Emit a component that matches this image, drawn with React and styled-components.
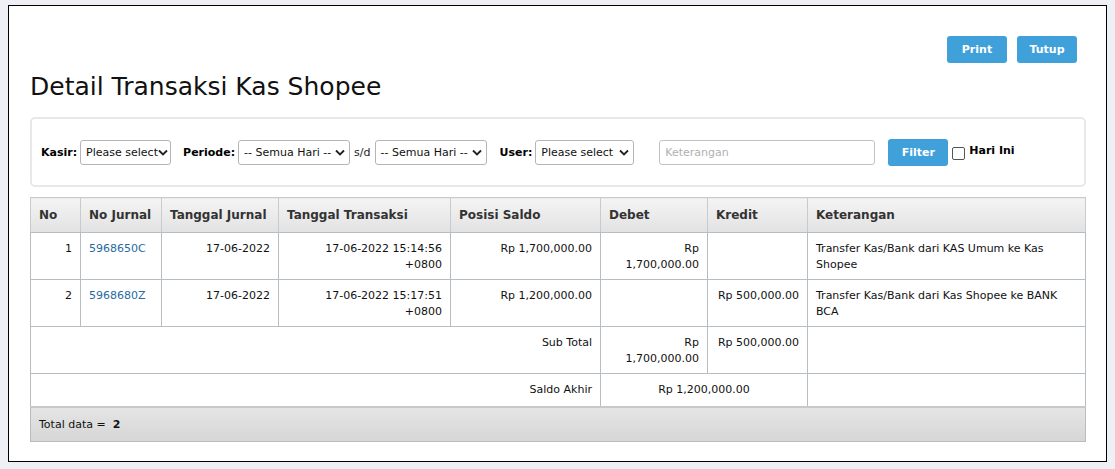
import React from "react";
import styled, { createGlobalStyle } from "styled-components";

const GlobalStyle = createGlobalStyle`
  html, body {
    margin: 0;
    padding: 0;
    background: #eff0f6;
  }
  body {
    font-family: "DejaVu Sans", Verdana, sans-serif;
    color: #000;
  }
`;

const Page = styled.div`
  padding: 5px 8px 8px 8px;
`;

const Panel = styled.div`
  background: #fff;
  border: 1px solid #000;
  height: 457px;
  box-sizing: border-box;
  padding: 30px 20px 20px 21px;
`;

const Toolbar = styled.div`
  display: flex;
  justify-content: flex-end;
  gap: 10px;
  padding-right: 9px;
`;

const Button = styled.button`
  width: ${(p) => p.w || 60}px;
  height: 27px;
  border: none;
  border-radius: 3px;
  background: #40a0da;
  color: #fff;
  font-family: "DejaVu Sans", Verdana, sans-serif;
  font-weight: bold;
  font-size: 11px;
  padding: 0;
  margin-left: ${(p) => p.ml || 0}px;
  cursor: pointer;
`;

const Title = styled.h1`
  margin: 8px 0 14px 0;
  font-weight: normal;
  font-size: 25px;
  line-height: 32px;
  color: #111;
`;

const FilterBox = styled.div`
  border: 2px solid #e8e8e8;
  border-radius: 5px;
  height: 70px;
  box-sizing: border-box;
  display: flex;
  align-items: center;
  padding: 0 9px;
  font-size: 11px;
`;

const Label = styled.label`
  font-weight: bold;
  font-size: 11px;
  margin: 0 3px 0 ${(p) => p.ml || 0}px;
`;

const Sep = styled.span`
  margin: 0 4px;
  font-size: 11px;
  color: #222;
`;

const Select = styled.div`
  width: ${(p) => p.w}px;
  height: 25px;
  box-sizing: border-box;
  border: 1px solid #b5b5b5;
  border-radius: 3px;
  display: flex;
  align-items: center;
  justify-content: space-between;
  padding: 0 4px 0 5px;
  font-size: 11px;
  white-space: nowrap;
  overflow: hidden;
  color: #111;
`;

const Chevron = () => (
  <svg width="10" height="7" viewBox="0 0 10 7" style={{ flexShrink: 0 }}>
    <path d="M1 1.5 L5 5.5 L9 1.5" fill="none" stroke="#222" strokeWidth="1.8" />
  </svg>
);

const Input = styled.div`
  width: 216px;
  height: 25px;
  box-sizing: border-box;
  border: 1px solid #c3c3c3;
  border-radius: 3px;
  margin-left: 25px;
  display: flex;
  align-items: center;
  padding-left: 5px;
  font-size: 11px;
  color: #b0b0b0;
`;

const Check = styled.span`
  width: 11px;
  height: 11px;
  border: 1px solid #555;
  border-radius: 2px;
  margin: 2px 4px 0 4px;
  display: inline-block;
`;

const CheckLabel = styled.span`
  font-weight: bold;
  font-size: 11px;
  align-self: flex-start;
  margin-top: 25px;
`;

const Table = styled.table`
  margin-top: 10px;
  width: 1056px;
  border-collapse: collapse;
  table-layout: fixed;
  font-size: 11px;
  border: 1px solid #b6bec3;
`;

const Th = styled.th`
  height: 35px;
  box-sizing: border-box;
  text-align: left;
  padding: 0 8px;
  font-size: 12px;
  color: #333;
  background: linear-gradient(#f4f4f4, #e2e2e2);
  border: 1px solid #c6cbce;
  border-bottom: 1px solid #b6bec3;
`;

const Td = styled.td`
  border: 1px solid #b6bec3;
  padding: 8px 8px 6px 8px;
  vertical-align: top;
  line-height: 16px;
  height: ${(p) => p.h || 31}px;
  box-sizing: border-box;
  text-align: ${(p) => p.align || "left"};
  color: #111;
`;

const Link = styled.a`
  color: #2a6aa0;
  text-decoration: none;
`;

const FootTd = styled.td`
  height: 33px;
  padding: 0 8px;
  background: linear-gradient(#e4e4e4, #d6d6d6);
  border-top: 2px solid #c8c8c8;
  font-size: 11px;
  color: #111;
`;

const rows = [
  {
    no: 1,
    jurnal: "5968650C",
    tgl: "17-06-2022",
    trans: "17-06-2022 15:14:56 +0800",
    saldo: "Rp 1,700,000.00",
    debet: "Rp 1,700,000.00",
    kredit: "",
    ket: "Transfer Kas/Bank dari KAS Umum ke Kas Shopee",
  },
  {
    no: 2,
    jurnal: "5968680Z",
    tgl: "17-06-2022",
    trans: "17-06-2022 15:17:51 +0800",
    saldo: "Rp 1,200,000.00",
    debet: "",
    kredit: "Rp 500,000.00",
    ket: "Transfer Kas/Bank dari Kas Shopee ke BANK BCA",
  },
];

function App() {
  return (
    <Page>
      <GlobalStyle />
      <Panel>
        <Toolbar>
          <Button>Print</Button>
          <Button>Tutup</Button>
        </Toolbar>
        <Title>Detail Transaksi Kas Shopee</Title>
        <FilterBox>
          <Label>Kasir:</Label>
          <Select w={91}>
            Please select
            <Chevron />
          </Select>
          <Label ml={12}>Periode:</Label>
          <Select w={112}>
            -- Semua Hari --
            <Chevron />
          </Select>
          <Sep>s/d</Sep>
          <Select w={112}>
            -- Semua Hari --
            <Chevron />
          </Select>
          <Label ml={13}>User:</Label>
          <Select w={99}>
            Please select
            <Chevron />
          </Select>
          <Input>Keterangan</Input>
          <Button ml={13}>Filter</Button>
          <Check />
          <CheckLabel>Hari Ini</CheckLabel>
        </FilterBox>
        <Table>
          <colgroup>
            <col style={{ width: 50 }} />
            <col style={{ width: 81 }} />
            <col style={{ width: 117 }} />
            <col style={{ width: 172 }} />
            <col style={{ width: 150 }} />
            <col style={{ width: 107 }} />
            <col style={{ width: 100 }} />
            <col />
          </colgroup>
          <thead>
            <tr>
              <Th>No</Th>
              <Th>No Jurnal</Th>
              <Th>Tanggal Jurnal</Th>
              <Th>Tanggal Transaksi</Th>
              <Th>Posisi Saldo</Th>
              <Th>Debet</Th>
              <Th>Kredit</Th>
              <Th>Keterangan</Th>
            </tr>
          </thead>
          <tbody>
            {rows.map((r) => (
              <tr key={r.no}>
                <Td h={47} align="right">{r.no}</Td>
                <Td h={47}>
                  <Link href="#">{r.jurnal}</Link>
                </Td>
                <Td h={47} align="right">{r.tgl}</Td>
                <Td h={47} align="right">{r.trans}</Td>
                <Td h={47} align="right">{r.saldo}</Td>
                <Td h={47} align="right">{r.debet}</Td>
                <Td h={47} align="right">{r.kredit}</Td>
                <Td h={47}>{r.ket}</Td>
              </tr>
            ))}
            <tr>
              <Td h={47} colSpan={5} align="right">Sub Total</Td>
              <Td h={47} align="right">Rp 1,700,000.00</Td>
              <Td h={47} align="right">Rp 500,000.00</Td>
              <Td h={47} />
            </tr>
            <tr>
              <Td h={33} colSpan={5} align="right">Saldo Akhir</Td>
              <Td h={33} colSpan={2} align="center">Rp 1,200,000.00</Td>
              <Td h={33} />
            </tr>
          </tbody>
          <tfoot>
            <tr>
              <FootTd colSpan={8}>
                Total data = &nbsp;<b>2</b>
              </FootTd>
            </tr>
          </tfoot>
        </Table>
      </Panel>
    </Page>
  );
}

export default App;
